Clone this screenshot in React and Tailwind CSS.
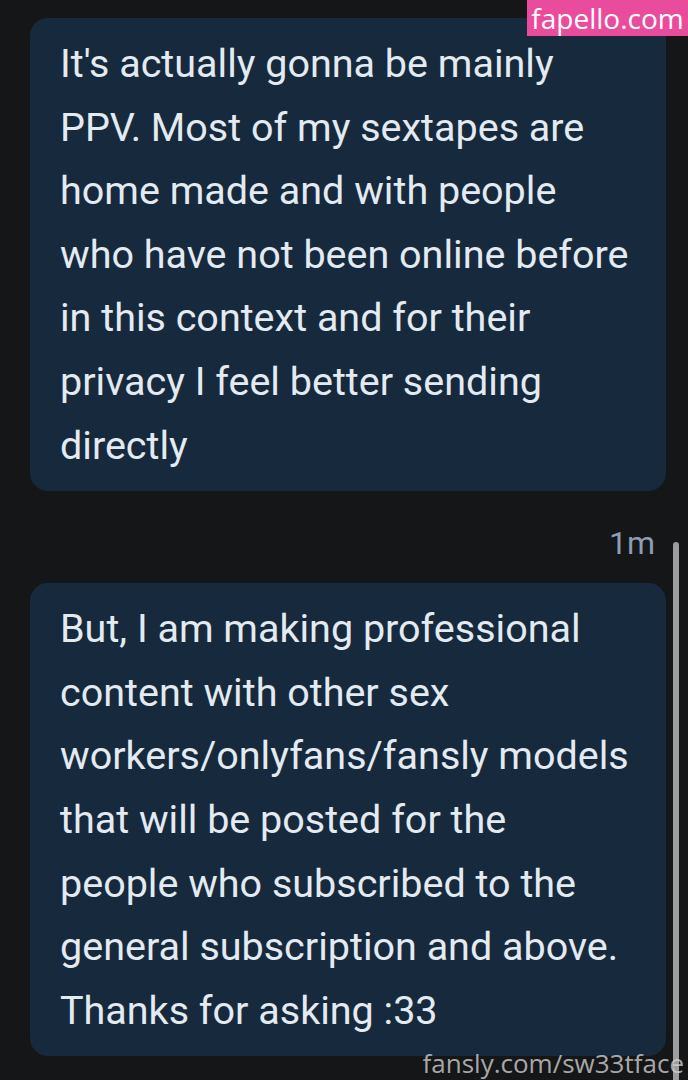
import React from "react";

const first = [
  "It's actually gonna be mainly",
  "PPV. Most of my sextapes are",
  "home made and with people",
  "who have not been online before",
  "in this context and for their",
  "privacy I feel better sending",
  "directly",
];

const second = [
  "But, I am making professional",
  "content with other sex",
  "workers/onlyfans/fansly models",
  "that will be posted for the",
  "people who subscribed to the",
  "general subscription and above.",
  "Thanks for asking :33",
];

const Bubble = ({ lines }) => (
  <div className="ml-[30px] w-[636px] rounded-[18px] bg-[#172a3d] pl-[30px] py-[14px] text-[39.5px] leading-[63.6px] text-[#e3eaf1] font-['Roboto',sans-serif]">
    {lines.map((l) => (
      <div key={l} className="whitespace-nowrap">{l}</div>
    ))}
  </div>
);

export default function App() {
  return (
    <div className="relative h-[1080px] w-[688px] overflow-hidden bg-[#151618] pt-[18px]">
      <Bubble lines={first} />
      <div className="flex justify-end pr-[33px] pt-[30px] pb-[18px] text-[32px] leading-[44px] text-[#8e9db3] font-['Roboto',sans-serif]">
        1m
      </div>
      <Bubble lines={second} />

      <div className="absolute left-[673px] top-[542px] h-[560px] w-[6px] rounded-full bg-[#9d9d9d]" />

      <div className="absolute right-0 top-0 flex h-[36px] w-[161px] items-center justify-center bg-[#ea4c9d] text-[28px] text-white font-['Open_Sans',sans-serif]">
        fapello.com
      </div>

      <div className="absolute bottom-[1px] right-[4px] text-[26px] leading-[32px] text-[#d0d0d0]/80 font-['Open_Sans',sans-serif]">
        fansly.com/sw33tface
      </div>
    </div>
  );
}
